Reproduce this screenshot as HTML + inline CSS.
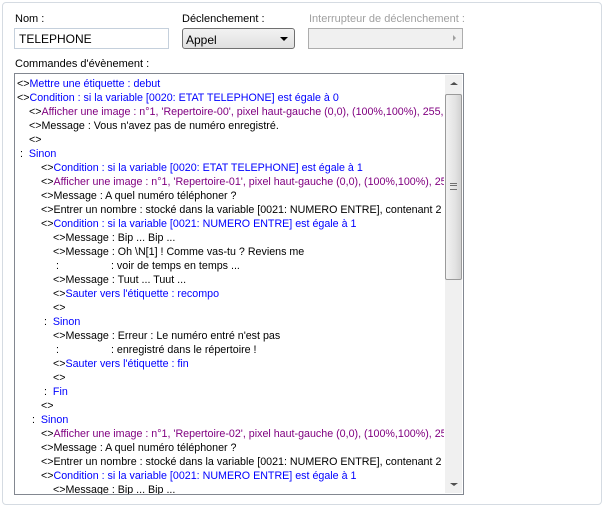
<!DOCTYPE html>
<html><head><meta charset="utf-8"><style>
body{margin:0;width:604px;height:507px;background:#fff;font-family:"Liberation Sans",sans-serif;font-size:11px;color:#000;position:relative;overflow:hidden}
.panel{position:absolute;left:2px;top:2px;width:598px;height:501px;border:1px solid #d5dbe2;border-radius:4px;background:#fff}
.lbl{position:absolute;font-size:11px}
.inp{position:absolute;box-sizing:border-box;border:1px solid #abb6c4;background:#fff}
.list{position:absolute;left:14px;top:73px;width:450px;height:422px;box-sizing:border-box;border:1px solid #828790;background:#fff;overflow:hidden;font-size:10.7px}
.ln{position:absolute;left:0;right:19px;height:14px;line-height:14px;white-space:pre;overflow:hidden;margin-top:1px}
.b{color:#0000ff}.p{color:#800080}
.sb{position:absolute;right:1px;top:1px;width:17px;height:418px;background:#f0f0f0}
</style></head><body>
<div class="panel"></div>
<div class="lbl" style="left:15px;top:13px">Nom :</div>
<div class="inp" style="left:14px;top:28px;width:155px;height:21px;border-color:#c5d0dc;padding:3px 4px;font-size:12px">TELEPHONE</div>
<div class="lbl" style="left:182px;top:13px">Déclenchement :</div>
<div class="inp" style="left:182px;top:28px;width:113px;height:21px;border-color:#707070;border-radius:3px;background:linear-gradient(#f2f2f2,#e0e0e0);padding:4px 3px;font-size:12px">Appel<span style="position:absolute;right:6px;top:8px;width:0;height:0;border-left:4px solid transparent;border-right:4px solid transparent;border-top:4px solid #000"></span></div>
<div class="lbl" style="left:309px;top:13px;color:#a0a0a0">Interrupteur de déclenchement :</div>
<div class="inp" style="left:308px;top:28px;width:155px;height:21px;border-color:#adadad;background:#f0f0f0"><span style="position:absolute;right:6px;top:6px;border-top:3px solid transparent;border-bottom:3px solid transparent;border-left:3px solid #a0a0a0"></span></div>
<div class="lbl" style="left:15px;top:58px">Commandes d'évènement :</div>
<div class="list">
<div class="ln" style="top:2px;left:2px">&lt;&gt;<span class="b">Mettre une étiquette : debut</span></div>
<div class="ln" style="top:16px;left:2px">&lt;&gt;<span class="b">Condition : si la variable [0020: ETAT TELEPHONE] est égale à 0</span></div>
<div class="ln" style="top:30px;left:14px">&lt;&gt;<span class="p">Afficher une image : n°1, 'Repertoire-00', pixel haut-gauche (0,0), (100%,100%), 255, Normal</span></div>
<div class="ln" style="top:44px;left:14px">&lt;&gt;Message : Vous n'avez pas de numéro enregistré.</div>
<div class="ln" style="top:58px;left:14px">&lt;&gt;</div>
<div class="ln" style="top:72px;left:5px">:  <span class="b">Sinon</span></div>
<div class="ln" style="top:86px;left:26px">&lt;&gt;<span class="b">Condition : si la variable [0020: ETAT TELEPHONE] est égale à 1</span></div>
<div class="ln" style="top:100px;left:26px">&lt;&gt;<span class="p">Afficher une image : n°1, 'Repertoire-01', pixel haut-gauche (0,0), (100%,100%), 255, Normal</span></div>
<div class="ln" style="top:114px;left:26px">&lt;&gt;Message : A quel numéro téléphoner ?</div>
<div class="ln" style="top:128px;left:26px">&lt;&gt;Entrer un nombre : stocké dans la variable [0021: NUMERO ENTRE], contenant 2 chiffres</div>
<div class="ln" style="top:142px;left:26px">&lt;&gt;<span class="b">Condition : si la variable [0021: NUMERO ENTRE] est égale à 1</span></div>
<div class="ln" style="top:156px;left:38px">&lt;&gt;Message : Bip ... Bip ...</div>
<div class="ln" style="top:170px;left:38px">&lt;&gt;Message : Oh \N[1] ! Comme vas-tu ? Reviens me</div>
<div class="ln" style="top:184px;left:41px">:<span style="display:inline-block;width:52px"></span>: voir de temps en temps ...</div>
<div class="ln" style="top:198px;left:38px">&lt;&gt;Message : Tuut ... Tuut ...</div>
<div class="ln" style="top:212px;left:38px">&lt;&gt;<span class="b">Sauter vers l'étiquette : recompo</span></div>
<div class="ln" style="top:226px;left:38px">&lt;&gt;</div>
<div class="ln" style="top:240px;left:29px">:  <span class="b">Sinon</span></div>
<div class="ln" style="top:254px;left:38px">&lt;&gt;Message : Erreur : Le numéro entré n'est pas</div>
<div class="ln" style="top:268px;left:41px">:<span style="display:inline-block;width:52px"></span>: enregistré dans le répertoire !</div>
<div class="ln" style="top:282px;left:38px">&lt;&gt;<span class="b">Sauter vers l'étiquette : fin</span></div>
<div class="ln" style="top:296px;left:38px">&lt;&gt;</div>
<div class="ln" style="top:310px;left:29px">:  <span class="b">Fin</span></div>
<div class="ln" style="top:324px;left:26px">&lt;&gt;</div>
<div class="ln" style="top:338px;left:17px">:  <span class="b">Sinon</span></div>
<div class="ln" style="top:352px;left:26px">&lt;&gt;<span class="p">Afficher une image : n°1, 'Repertoire-02', pixel haut-gauche (0,0), (100%,100%), 255, Normal</span></div>
<div class="ln" style="top:366px;left:26px">&lt;&gt;Message : A quel numéro téléphoner ?</div>
<div class="ln" style="top:380px;left:26px">&lt;&gt;Entrer un nombre : stocké dans la variable [0021: NUMERO ENTRE], contenant 2 chiffres</div>
<div class="ln" style="top:394px;left:26px">&lt;&gt;<span class="b">Condition : si la variable [0021: NUMERO ENTRE] est égale à 1</span></div>
<div class="ln" style="top:408px;left:38px">&lt;&gt;Message : Bip ... Bip ...</div>
<div class="sb">
<span style="position:absolute;left:5px;top:7px;border-left:4px solid transparent;border-right:4px solid transparent;border-bottom:3px solid #505050;width:0;height:0"></span>
<div style="position:absolute;left:0;top:19px;width:15px;height:184px;border:1px solid #9a9a9a;border-radius:2px;background:linear-gradient(90deg,#f2f2f2,#e3e3e3 60%,#d2d2d2)"><div style="position:absolute;left:4px;top:88px;width:7px;height:5px;border-top:1px solid #707070;border-bottom:1px solid #707070"></div><div style="position:absolute;left:4px;top:90px;width:7px;height:1px;background:#707070"></div></div>
<span style="position:absolute;left:5px;top:408px;border-left:4px solid transparent;border-right:4px solid transparent;border-top:3px solid #505050;width:0;height:0"></span>
</div>
</div>
</body></html>
